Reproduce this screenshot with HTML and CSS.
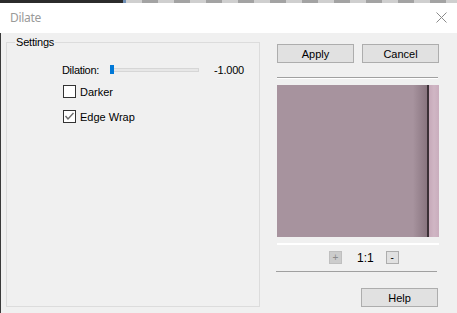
FILE: index.html
```html
<!DOCTYPE html>
<html lang="en">
<head>
  <meta charset="UTF-8">
  <title>Dilate</title>
  <link rel="stylesheet" href="styles.css">
</head>
<body>

  <!-- strip of the window behind -->
  <div class="backdrop">
    <div class="backdrop-dark"></div>
    <div class="backdrop-mark"></div>
    <div class="backdrop-checker"></div>
  </div>

  <div class="titlebar">
    <span class="title">Dilate</span>
    <svg class="close" width="11" height="11" viewBox="0 0 11 11">
      <path d="M0.5 0.5 L10.5 10.5 M10.5 0.5 L0.5 10.5" stroke="#8a8a8a" stroke-width="1" fill="none"/>
    </svg>
  </div>

  <div class="content">
    <!-- Settings group -->
    <div class="group">
      <span class="group-title">Settings</span>

      <div class="slider-row">
        <span class="slider-label">Dilation:</span>
        <div class="track">
          <div class="thumb"></div>
        </div>
        <span class="slider-value">-1.000</span>
      </div>

      <label class="check-row first">
        <span class="box"></span>
        <span>Darker</span>
      </label>

      <label class="check-row second">
        <span class="box">
          <svg width="11" height="11" viewBox="0 0 11 11">
            <polyline points="1.5,5 4,8 9.5,2" stroke="#6b6b6b" stroke-width="1.4" fill="none"/>
          </svg>
        </span>
        <span>Edge Wrap</span>
      </label>
    </div>

    <!-- Preview column -->
    <div class="side">
      <div class="button-row">
        <button class="btn">Apply</button>
        <button class="btn">Cancel</button>
      </div>
      <div class="separator top-sep"></div>
      <div class="preview">
        <div class="preview-fade"></div>
        <div class="preview-edge"></div>
        <div class="preview-pink"></div>
      </div>
      <div class="preview-base"></div>
      <div class="zoom-row">
        <span class="zoom-btn disabled">+</span>
        <span class="zoom-value">1:1</span>
        <span class="zoom-btn">-</span>
      </div>
      <div class="separator bottom-sep"></div>
      <div class="help-row">
        <button class="btn">Help</button>
      </div>
    </div>
  </div>

</body>
</html>
```

FILE: styles.css
```css
body {
  margin: 0;
  width: 457px;
  height: 313px;
  overflow: hidden;
  font-family: "Liberation Sans", Arial, sans-serif;
  font-size: 11px;
  color: #000;
  background-color: #f0f0f0;
  display: flex;
  flex-direction: column;
}

.backdrop {
  display: flex;
  height: 3px;
}

.backdrop-dark {
  width: 123px;
  background-color: #2b2b2b;
}

.backdrop-mark {
  width: 3px;
  background-color: #6f8fb5;
}

.backdrop-checker {
  flex: 1;
  background: repeating-linear-gradient(90deg, #cfcfcf 0 16px, #a3a3a3 16px 32px);
}

.titlebar {
  height: 30px;
  background-color: #ffffff;
  display: flex;
  align-items: center;
  justify-content: space-between;
  padding: 0 10px 0 10px;
}

.title {
  font-family: "Noto Sans", "Open Sans", sans-serif;
  font-size: 12px;
  letter-spacing: -0.3px;
  color: #9a9a9a;
  margin-top: -1px;
}

.close {
  margin-right: 0;
  margin-top: -1px;
}

.content {
  flex: 1;
  display: flex;
  border-left: 1px solid #3a3a3a;
  padding-left: 5px;
}

.group {
  position: relative;
  width: 252px;
  height: 263px;
  margin-top: 9px;
  border: 1px solid #dcdcdc;
}

.group-title {
  position: absolute;
  top: -7px;
  left: 8px;
  padding: 0 1px;
  background-color: #f0f0f0;
  letter-spacing: -0.2px;
  line-height: 13px;
}

.slider-row {
  display: flex;
  align-items: center;
  height: 13px;
  margin-top: 20px;
}

.slider-label {
  width: 92px;
  text-align: right;
  letter-spacing: -0.3px;
}

.track {
  position: relative;
  width: 87px;
  height: 2px;
  margin-left: 11px;
  background-color: #e7e7e7;
  border: 1px solid #d6d6d6;
}

.thumb {
  position: absolute;
  left: -1px;
  top: -4px;
  width: 4px;
  height: 9px;
  background-color: #0078d7;
}

.slider-value {
  margin-left: 15px;
  letter-spacing: -0.2px;
}

.check-row {
  display: flex;
  align-items: center;
  gap: 4px;
  height: 13px;
  margin-left: 56px;
}

.check-row.first {
  margin-top: 9px;
}

.check-row.second {
  margin-top: 12px;
}

.box {
  width: 11px;
  height: 11px;
  border: 1px solid #333333;
  background-color: #ffffff;
  display: flex;
}

.side {
  width: 162px;
  margin-left: 17px;
  display: flex;
  flex-direction: column;
}

.button-row {
  display: flex;
  gap: 8px;
  margin-top: 11px;
}

.btn {
  width: 77px;
  height: 19px;
  padding: 0;
  background-color: #e1e1e1;
  border: 1px solid #adadad;
  font-family: "Liberation Sans", Arial, sans-serif;
  font-size: 11px;
  color: #000;
}

.separator {
  height: 0;
  border-top: 1px solid #a0a0a0;
  border-bottom: 1px solid #ffffff;
}

.top-sep {
  margin-top: 14px;
  width: 161px;
}

.preview {
  position: relative;
  height: 152px;
  margin-top: 6px;
  background-color: #a7939e;
}

.preview-fade {
  position: absolute;
  top: 0;
  bottom: 0;
  left: 136px;
  width: 14px;
  background: linear-gradient(90deg, rgba(80, 60, 70, 0) 0%, rgba(80, 60, 70, 0.35) 100%);
}

.preview-edge {
  position: absolute;
  top: 0;
  bottom: 0;
  left: 150px;
  width: 2px;
  background-color: #3b3036;
}

.preview-pink {
  position: absolute;
  top: 0;
  bottom: 0;
  left: 152px;
  right: 0;
  background: linear-gradient(90deg, #c6a9b9 0%, #d0b6c4 50%, #c9adbd 100%);
}

.preview-base {
  height: 2px;
  margin-top: 6px;
  background-color: #ffffff;
}

.zoom-row {
  display: flex;
  align-items: center;
  height: 13px;
  margin-top: 6px;
  padding-left: 52px;
}

.zoom-btn {
  width: 11px;
  height: 11px;
  border: 1px solid #adadad;
  background-color: #e1e1e1;
  display: flex;
  align-items: center;
  justify-content: center;
  font-size: 10px;
  line-height: 11px;
}

.zoom-btn.disabled {
  background-color: #cccccc;
  border-color: #bfbfbf;
  color: #8a8a8a;
}

.zoom-value {
  margin-left: 15px;
  margin-right: 12px;
  font-size: 12px;
}

.bottom-sep {
  margin-top: 7px;
  margin-left: -1px;
  width: 161px;
  border-bottom-color: transparent;
}

.help-row {
  display: flex;
  justify-content: flex-end;
  margin-top: 15px;
  margin-right: 1px;
}
```
